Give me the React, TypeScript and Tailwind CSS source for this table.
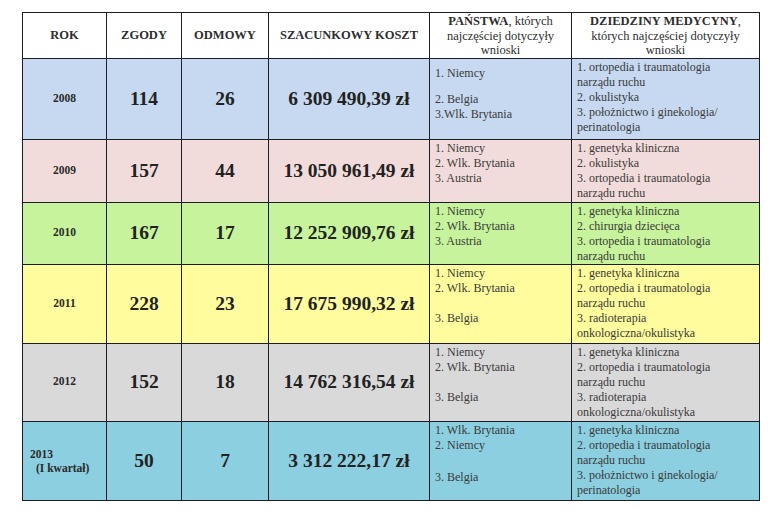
import React from "react";

type Country = { text: string; cls?: string };

type Row = {
  year: React.ReactNode;
  yes: string;
  no: string;
  cost: string;
  bg: string;
  h: string;
  countries: Country[];
  fields: string[];
};

const rows: Row[] = [
  {
    year: "2008",
    yes: "114",
    no: "26",
    cost: "6 309 490,39 zł",
    bg: "bg-[#c6d9f0]",
    h: "h-[81px]",
    countries: [
      { text: "1. Niemcy", cls: "mt-[6px]" },
      { text: "2. Belgia", cls: "mt-[11px]" },
      { text: "3.Wlk. Brytania" },
    ],
    fields: [
      "1. ortopedia i traumatologia",
      "narządu ruchu",
      "2. okulistyka",
      "3. położnictwo i ginekologia/",
      "perinatologia",
    ],
  },
  {
    year: "2009",
    yes: "157",
    no: "44",
    cost: "13 050 961,49 zł",
    bg: "bg-[#f2dcdb]",
    h: "h-[63px]",
    countries: [
      { text: "1. Niemcy" },
      { text: "2. Wlk. Brytania" },
      { text: "3. Austria" },
    ],
    fields: [
      "1. genetyka kliniczna",
      "2. okulistyka",
      "3. ortopedia i traumatologia",
      "narządu ruchu",
    ],
  },
  {
    year: "2010",
    yes: "167",
    no: "17",
    cost: "12 252 909,76 zł",
    bg: "bg-[#c6f39b]",
    h: "h-[62px]",
    countries: [
      { text: "1. Niemcy" },
      { text: "2. Wlk. Brytania" },
      { text: "3. Austria" },
    ],
    fields: [
      "1. genetyka kliniczna",
      "2. chirurgia dziecięca",
      "3. ortopedia i traumatologia",
      "narządu ruchu",
    ],
  },
  {
    year: "2011",
    yes: "228",
    no: "23",
    cost: "17 675 990,32 zł",
    bg: "bg-[#fefc9d]",
    h: "h-[79px]",
    countries: [
      { text: "1. Niemcy" },
      { text: "2. Wlk. Brytania" },
      { text: "3. Belgia", cls: "mt-[15px]" },
    ],
    fields: [
      "1. genetyka kliniczna",
      "2. ortopedia i traumatologia",
      "narządu ruchu",
      "3. radioterapia",
      "onkologiczna/okulistyka",
    ],
  },
  {
    year: "2012",
    yes: "152",
    no: "18",
    cost: "14 762 316,54 zł",
    bg: "bg-[#d9d9d9]",
    h: "h-[78px]",
    countries: [
      { text: "1. Niemcy" },
      { text: "2. Wlk. Brytania" },
      { text: "3. Belgia", cls: "mt-[15px]" },
    ],
    fields: [
      "1. genetyka kliniczna",
      "2. ortopedia i traumatologia",
      "narządu ruchu",
      "3. radioterapia",
      "onkologiczna/okulistyka",
    ],
  },
  {
    year: (
      <div className="text-left pl-[7px] leading-[14px]">
        2013
        <br />
        <span className="pl-[6px]">(I kwartał)</span>
      </div>
    ),
    yes: "50",
    no: "7",
    cost: "3 312 222,17 zł",
    bg: "bg-[#8ccfe0]",
    h: "h-[79px]",
    countries: [
      { text: "1. Wlk. Brytania" },
      { text: "2. Niemcy" },
      { text: "3. Belgia", cls: "mt-[17px]" },
    ],
    fields: [
      "1. genetyka kliniczna",
      "2. ortopedia i traumatologia",
      "narządu ruchu",
      "3. położnictwo i ginekologia/",
      "perinatologia",
    ],
  },
];

const cell = "border-[1.5px] border-[#1b1e28]";

export default function App() {
  return (
    <div className="w-[780px] h-[520px] bg-white [font-family:'Liberation_Serif',serif] pl-[22px] pt-[12px]">
      <table className="table-fixed border-collapse w-[737px]">
        <colgroup>
          <col className="w-[84px]" />
          <col className="w-[75px]" />
          <col className="w-[87px]" />
          <col className="w-[161px]" />
          <col className="w-[142px]" />
          <col className="w-[188px]" />
        </colgroup>
        <thead>
          <tr className="h-[45px] text-[12.5px] text-[#2e2e2e]">
            <th className={`${cell} font-bold`}>ROK</th>
            <th className={`${cell} font-bold`}>ZGODY</th>
            <th className={`${cell} font-bold`}>ODMOWY</th>
            <th className={`${cell} font-bold`}>SZACUNKOWY KOSZT</th>
            <th className={`${cell} font-normal leading-[14.5px] align-top pt-px`}>
              <b>PAŃSTWA</b>, których
              <br />
              najczęściej dotyczyły
              <br />
              wnioski
            </th>
            <th className={`${cell} font-normal leading-[14.5px] align-top pt-px`}>
              <b>DZIEDZINY MEDYCYNY</b>,
              <br />
              których najczęściej dotyczyły
              <br />
              wnioski
            </th>
          </tr>
        </thead>
        <tbody>
          {rows.map((r, i) => (
            <tr key={i} className={`${r.h} ${r.bg}`}>
              <td className={`${cell} text-center align-middle font-bold text-[11.5px] text-[#2a2a2a]`}>
                {r.year}
              </td>
              <td className={`${cell} text-center align-middle font-bold text-[19.5px] text-[#222]`}>
                {r.yes}
              </td>
              <td className={`${cell} text-center align-middle font-bold text-[19.5px] text-[#222]`}>
                {r.no}
              </td>
              <td className={`${cell} text-center align-middle font-bold text-[19.5px] text-[#222]`}>
                {r.cost}
              </td>
              <td className={`${cell} align-top pl-[5px] pt-[1px] text-[12px] leading-[15px] text-[#3a3a3a]`}>
                {r.countries.map((c, j) => (
                  <div key={j} className={c.cls}>
                    {c.text}
                  </div>
                ))}
              </td>
              <td className={`${cell} align-top pl-[5px] pt-[1px] text-[12px] leading-[15px] text-[#3a3a3a]`}>
                {r.fields.map((f, j) => (
                  <div key={j} className="whitespace-nowrap">
                    {f}
                  </div>
                ))}
              </td>
            </tr>
          ))}
        </tbody>
      </table>
    </div>
  );
}
